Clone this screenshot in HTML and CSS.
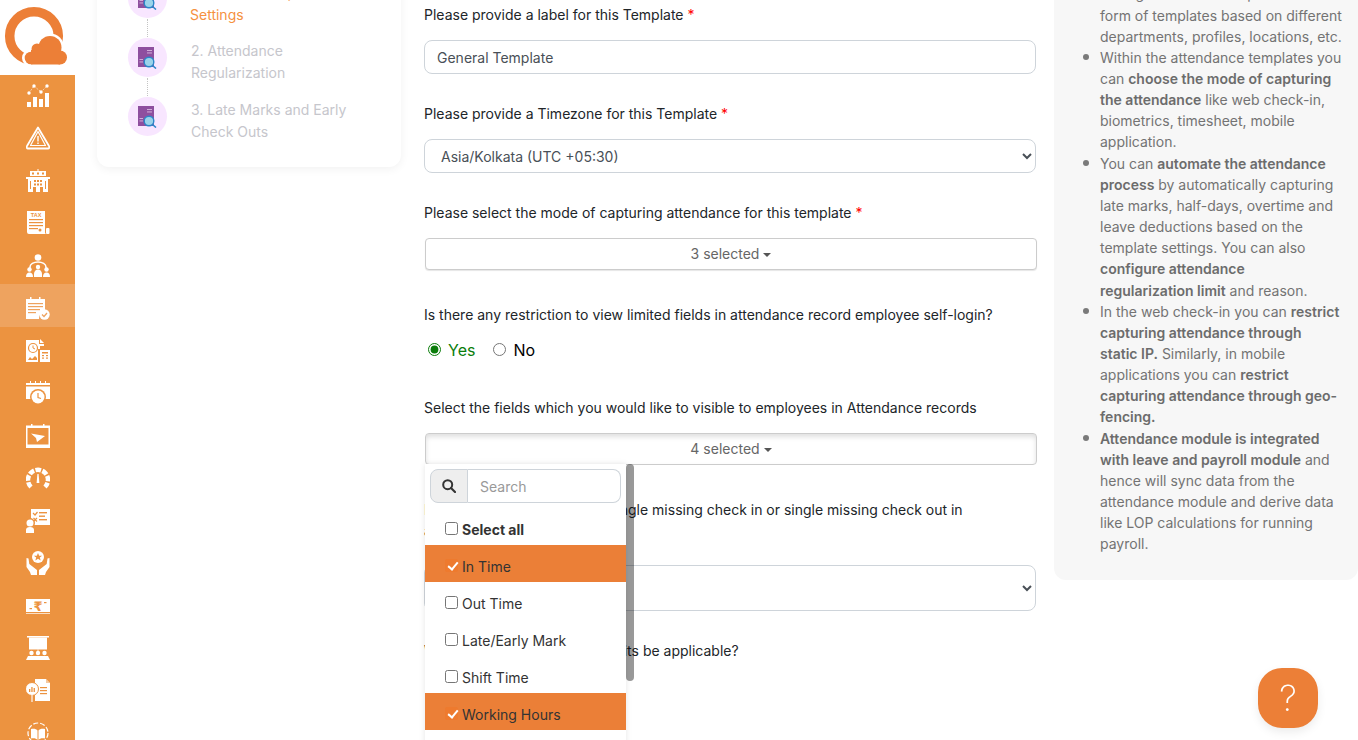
FILE: index.html
```html
<!DOCTYPE html>
<html lang="en">
<head>
<meta charset="utf-8">
<title>Attendance Template</title>
<link rel="stylesheet" href="styles.css">
</head>
<body>
<div class="page">
  <aside class="sidebar">
    <div class="logo">
      <svg width="75" height="75" viewBox="0 0 75 75">
        <circle cx="34" cy="36" r="24.3" fill="none" stroke="#ec7f37" stroke-width="9.5"/>
        <g fill="#fff"><circle cx="50" cy="47.500" r="14"/><circle cx="37" cy="49" r="8"/><circle cx="31" cy="58" r="9"/><circle cx="60" cy="57.500" r="10"/><rect x="30" y="52" width="30" height="15"/></g>
        <g fill="#ec7f37"><circle cx="50" cy="47.500" r="11.500"/><circle cx="37" cy="49" r="5.500"/><circle cx="31" cy="58" r="6.300"/><circle cx="60" cy="57.500" r="7"/><rect x="31" y="50" width="29" height="14.500"/></g>
      </svg>
    </div>
    <nav class="nav">
      <a class="nav-item"><svg class="ico" viewBox="0 0 24 24"><rect x="1" y="18" width="4" height="5"/><rect x="7" y="13" width="4" height="10"/><rect x="13" y="15" width="4" height="8"/><rect x="19" y="9" width="4" height="14"/><path d="M3 9l5-7 7 6 6-6" fill="none" stroke="#fff" stroke-width="1" stroke-dasharray="1.500 1.500" opacity=".7"/><circle cx="3" cy="9" r="1.700"/><circle cx="8" cy="2" r="1.700"/><circle cx="15" cy="8" r="1.700"/><circle cx="21" cy="2" r="1.700"/></svg></a>
      <a class="nav-item"><svg class="ico" viewBox="0 0 24 24"><path d="M12 1.500L23 20a1.500 1.500 0 0 1-1 2.500H2A1.500 1.500 0 0 1 1 20z" fill="none" stroke="#fff" stroke-width="1.800" stroke-linejoin="round"/><path d="M12 5.500L19.500 19.500H4.500z" fill="none" stroke="#fff" stroke-width="1.200" stroke-linejoin="round"/><rect x="11.300" y="10" width="1.400" height="5.500"/><rect x="11.300" y="16.500" width="1.400" height="1.500"/></svg></a>
      <a class="nav-item"><svg class="ico" viewBox="0 0 24 24"><rect x="11.500" y="0" width="1" height="3"/><rect x="4" y="2" width="16" height="5"/><path d="M0 8h24v2h-2v13h-5v-5h-3v5h-4v-5H7v5H2V10H0z"/><g fill="#ec9340"><rect x="6" y="3.500" width="2" height="2"/><rect x="11" y="3.500" width="2" height="2"/><rect x="16" y="3.500" width="2" height="2"/><rect x="8" y="11" width="2" height="2"/><rect x="11" y="11" width="2" height="2"/><rect x="14" y="11" width="2" height="2"/><rect x="8" y="14.500" width="2" height="2"/><rect x="11" y="14.500" width="2" height="2"/><rect x="14" y="14.500" width="2" height="2"/><rect x="4" y="12" width="1" height="8"/><rect x="19" y="12" width="1" height="8"/></g></svg></a>
      <a class="nav-item"><svg class="ico" viewBox="0 0 24 24"><path d="M1 0h18v21a2 2 0 0 0 1 2H3a2 2 0 0 1-2-2z"/><rect x="20" y="17" width="3.500" height="6" rx="1"/><text x="10" y="6" class="ico-tax">TAX</text><g fill="#ec9340"><rect x="3" y="8" width="14" height="1.200"/><rect x="3" y="11" width="14" height="1.200"/><rect x="3" y="14" width="14" height="1.200"/><rect x="3" y="17" width="9" height="1.200"/><circle cx="14" cy="19" r="1.500"/></g></svg></a>
      <a class="nav-item"><svg class="ico" viewBox="0 0 24 24"><circle cx="12" cy="3.500" r="3.300"/><path d="M4 14v-1a8 5 0 0 1 16 0v1" fill="none" stroke="#fff" stroke-width="1.500"/><circle cx="3.500" cy="15.500" r="2.200"/><circle cx="12" cy="13" r="2.200"/><circle cx="20.500" cy="15.500" r="2.200"/><path d="M0 23a3.500 4.500 0 0 1 7 0zM8 20a4 4.500 0 0 1 8 0v3H8zM17 23a3.500 4.500 0 0 1 7 0z"/></svg></a>
      <a class="nav-item is-active"><svg class="ico" viewBox="0 0 24 24"><path d="M0 3h19v12a7 7 0 0 0-6 8H0z"/><rect x="4" y="1" width="1.500" height="4"/><rect x="13" y="1" width="1.500" height="4"/><g fill="#eea35f"><rect x="2" y="7" width="15" height="1.200"/><rect x="2" y="10" width="15" height="1.200"/><rect x="2" y="13" width="12" height="1.200"/><rect x="2" y="16" width="8" height="1.200"/></g><circle cx="18.500" cy="18.500" r="5.200"/><path d="M16 18.500l2 2 3-3.500" fill="none" stroke="#eea35f" stroke-width="1.300"/></svg></a>
      <a class="nav-item"><svg class="ico" viewBox="0 0 24 24"><path d="M0 1h13v4h5v2h-4v3h-2v13H0z"/><path d="M14 0l4 4h-4z"/><rect x="14" y="11" width="10" height="12"/><circle cx="7" cy="9" r="4.500" fill="none" stroke="#ec9340" stroke-width="1.200"/><path d="M7 6.500V9l2 1" fill="none" stroke="#ec9340" stroke-width="1"/><path d="M2 21l2-3 2 2 3-3 2 2v2z" fill="#ec9340"/><g fill="#ec9340"><rect x="16" y="13" width="6" height="1.500"/><rect x="16" y="16" width="2" height="1.200"/><rect x="20" y="16" width="2" height="1.200"/><rect x="16" y="18.500" width="2" height="1.200"/><rect x="20" y="18.500" width="2" height="1.200"/></g></svg></a>
      <a class="nav-item"><svg class="ico" viewBox="0 0 24 24"><rect x="0" y="2" width="24" height="2"/><path d="M0 5.500h24V18H0z"/><g><rect x="4" y="0" width="1" height="2"/><rect x="9" y="0" width="1" height="2"/><rect x="14" y="0" width="1" height="2"/><rect x="19" y="0" width="1" height="2"/></g><circle cx="12" cy="16" r="8" fill="#ec9340"/><circle cx="12" cy="16" r="6.500"/><path d="M12 12v4.500l3 1" fill="none" stroke="#ec9340" stroke-width="1.200"/></svg></a>
      <a class="nav-item"><svg class="ico" viewBox="0 0 24 24"><path d="M0 1.500h24V24H0zM1.500 4v16.500h21V4z" fill-rule="evenodd"/><rect x="5" y="0" width="1.500" height="4"/><rect x="17" y="0" width="1.500" height="4"/><path d="M5 9.500L19 12l-8 6-1-4z"/></svg></a>
      <a class="nav-item"><svg class="ico" viewBox="0 0 24 24"><path d="M5 21A10 10 0 1 1 19 21" fill="none" stroke="#fff" stroke-width="4.500" stroke-dasharray="5.500 1.500"/><path d="M11.400 8h1.200l.8 9h-2.800z"/></svg></a>
      <a class="nav-item"><svg class="ico" viewBox="0 0 24 24"><rect x="5" y="0" width="19" height="16"/><g fill="#ec9340"><rect x="13" y="3" width="8" height="1.400"/><rect x="13" y="6.500" width="6" height="1.400"/><rect x="13" y="10" width="8" height="1.400"/></g><path d="M7 4l2 2 2.500-3M7.500 9l3.500 3.500M11 9l-3.500 3.500" fill="none" stroke="#ec9340" stroke-width="1.200"/><circle cx="4" cy="14" r="5" fill="#ec9340"/><circle cx="4" cy="14" r="3.500"/><path d="M0 24v-3a4 3 0 0 1 8 0v3z"/></svg></a>
      <a class="nav-item"><svg class="ico" viewBox="0 0 24 24"><circle cx="12" cy="6" r="6"/><path d="M12 2l1.200 2.700h2.900l-2.300 1.900.9 2.900-2.700-1.700-2.700 1.700.9-2.900-2.300-1.900h2.900z" fill="#ec9340"/><path d="M.5 7l2 .5.800 5.500 7.700 6v5H5l-1-3-3.500-5zM23.500 7l-2 .5-.8 5.500-7.700 6v5h6l1-3 3.500-5z"/></svg></a>
      <a class="nav-item"><svg class="ico" viewBox="0 0 24 24"><path d="M0 5h24v13H0z"/><rect x="0" y="19" width="24" height="1" opacity=".7"/><text x="12" y="16.500" class="ico-rupee">₹</text><rect x="3.500" y="14" width="2.500" height="1.200" fill="#ec9340"/><rect x="18" y="8" width="2.500" height="1.200" fill="#ec9340"/></svg></a>
      <a class="nav-item"><svg class="ico" viewBox="0 0 24 24"><rect x="1" y="0" width="22" height="1.500"/><rect x="3" y="1.500" width="18" height="12"/><rect x="11.600" y="13.500" width=".8" height="2"/><circle cx="5.500" cy="17" r="2.200"/><circle cx="12" cy="17" r="2.200"/><circle cx="18.500" cy="17" r="2.200"/><path d="M0 24l2-4h20l2 4z"/></svg></a>
      <a class="nav-item"><svg class="ico" viewBox="0 0 24 24"><path d="M9 0h11l4 4v18H9z"/><path d="M20 0l4 4h-4z" fill="#ec9340" opacity=".5"/><circle cx="6" cy="10" r="6.500" stroke="#ec9340" stroke-width="1"/><rect x="5.300" y="16" width="1.400" height="7" opacity=".8"/><g fill="#ec9340"><rect x="3" y="10" width="1.300" height="3"/><rect x="5.300" y="8" width="1.300" height="5"/><rect x="7.600" y="9" width="1.300" height="4"/><rect x="14" y="8" width="7" height="1.200"/><rect x="14" y="11" width="7" height="1.200"/><rect x="14" y="14" width="7" height="1.200"/></g></svg></a>
      <a class="nav-item"><svg class="ico" viewBox="0 0 24 24"><circle cx="12" cy="12" r="10" fill="none" stroke="#fff" stroke-width="1.200" stroke-dasharray="5 2"/><path d="M5 8c3-.5 5.500 0 6.500 1.500V19c-1-1.500-3.500-2-6.500-1.500zM19 8c-3-.5-5.500 0-6.500 1.500V19c1-1.500 3.500-2 6.500-1.500z"/></svg></a>
    </nav>
  </aside>

  <main class="content">
    <section class="steps-card">
      <div class="step step-current">
        <div class="step-dot"><svg class="step-ico" viewBox="0 0 20 22"><rect x="0" y="0" width="16" height="20" fill="#8e4f9f"/><g fill="#d9b8e0"><rect x="9" y="3" width="5" height=".9"/><rect x="9" y="5.500" width="5" height=".9"/><rect x="1.500" y="12" width="3.500" height=".9"/><rect x="1.500" y="14.500" width="3.500" height=".9"/></g><circle cx="11" cy="15" r="4.800" fill="#9bd3ea" stroke="#2b87c8" stroke-width="1.400"/><path d="M14.500 18.500l3.500 3" stroke="#2b87c8" stroke-width="1.600"/></svg></div>
        <div class="step-text">1. General Template Settings</div>
      </div>
      <div class="step">
        <div class="step-dot"><svg class="step-ico" viewBox="0 0 20 22"><rect x="0" y="0" width="16" height="20" fill="#8e4f9f"/><g fill="#d9b8e0"><rect x="9" y="3" width="5" height=".9"/><rect x="9" y="5.500" width="5" height=".9"/><rect x="1.500" y="12" width="3.500" height=".9"/><rect x="1.500" y="14.500" width="3.500" height=".9"/></g><circle cx="11" cy="15" r="4.800" fill="#9bd3ea" stroke="#2b87c8" stroke-width="1.400"/><path d="M14.500 18.500l3.500 3" stroke="#2b87c8" stroke-width="1.600"/></svg></div>
        <div class="step-text">2. Attendance Regularization</div>
      </div>
      <div class="step step-last">
        <div class="step-dot"><svg class="step-ico" viewBox="0 0 20 22"><rect x="0" y="0" width="16" height="20" fill="#8e4f9f"/><g fill="#d9b8e0"><rect x="9" y="3" width="5" height=".9"/><rect x="9" y="5.500" width="5" height=".9"/><rect x="1.500" y="12" width="3.500" height=".9"/><rect x="1.500" y="14.500" width="3.500" height=".9"/></g><circle cx="11" cy="15" r="4.800" fill="#9bd3ea" stroke="#2b87c8" stroke-width="1.400"/><path d="M14.500 18.500l3.500 3" stroke="#2b87c8" stroke-width="1.600"/></svg></div>
        <div class="step-text">3. Late Marks and Early Check Outs</div>
      </div>
    </section>

    <section class="form">
      <div class="field gap-29">
        <label class="label">Please provide a label for this Template <span class="req">*</span></label>
        <input class="control" type="text" value="General Template">
      </div>
      <div class="field gap-29">
        <label class="label">Please provide a Timezone for this Template <span class="req">*</span></label>
        <select class="control"><option>Asia/Kolkata (UTC +05:30)</option></select>
      </div>
      <div class="field gap-34">
        <label class="label">Please select the mode of capturing attendance for this template <span class="req">*</span></label>
        <button class="multi" type="button">3 selected<span class="caret"></span></button>
      </div>
      <div class="field gap-37">
        <label class="label">Is there any restriction to view limited fields in attendance record employee self-login?</label>
        <div class="radios">
          <label class="radio radio-yes"><input type="radio" name="restrict" checked>Yes</label>
          <label class="radio"><input type="radio" name="restrict">No</label>
        </div>
      </div>
      <div class="field gap-34 has-menu">
        <label class="label">Select the fields which you would like to visible to employees in Attendance records</label>
        <button class="multi multi-open" type="button">4 selected<span class="caret"></span></button>
        <div class="menu">
          <div class="menu-search">
            <span class="menu-addon"><svg width="14" height="14" viewBox="0 0 14 14"><circle cx="5.700" cy="5.700" r="4.500" fill="none" stroke="#333" stroke-width="2"/><path d="M9 9l4 4" stroke="#333" stroke-width="2.200" stroke-linecap="round"/></svg></span>
            <input class="menu-input" type="text" placeholder="Search">
          </div>
          <label class="opt opt-all"><input type="checkbox">Select all</label>
          <label class="opt opt-on"><input type="checkbox" checked>In Time</label>
          <label class="opt"><input type="checkbox">Out Time</label>
          <label class="opt"><input type="checkbox">Late/Early Mark</label>
          <label class="opt"><input type="checkbox">Shift Time</label>
          <label class="opt opt-on"><input type="checkbox" checked>Working Hours</label>
          <span class="menu-thumb"></span>
        </div>
      </div>
      <div class="field gap-29">
        <label class="label label-tall">How do you want to mark a single missing check in or single missing check out in attendance?</label>
        <select class="control control-tall"><option></option></select>
      </div>
      <div class="field">
        <label class="label">When should the late mark limits be applicable?</label>
      </div>
    </section>

    <section class="info">
      <ul class="info-list">
        <li>Configure attendance policies in the form of templates based on different departments, profiles, locations, etc.</li>
        <li>Within the attendance templates you can <b>choose the mode of capturing the attendance</b> like web check-in, biometrics, timesheet, mobile application.</li>
        <li>You can <b>automate the attendance process</b> by automatically capturing late marks, half-days, overtime and leave deductions based on the template settings. You can also <b>configure attendance<br>regularization limit</b> and reason.</li>
        <li>In the web check-in you can <b>restrict capturing attendance through<br>static IP.</b> Similarly, in mobile applications you can <b>restrict capturing attendance through geo-fencing.</b></li>
        <li><b>Attendance module is integrated with leave and payroll module</b> and hence will sync data from the attendance module and derive data like LOP calculations for running payroll.</li>
      </ul>
    </section>
  </main>
</div>
<button class="help" type="button">?</button>
</body>
</html>
```
FILE: styles.css
```css
* { box-sizing: border-box; }
html, body { margin: 0; height: 100%; overflow: hidden; background: #fff; }
body { font-family: Inter, "Liberation Sans", sans-serif; font-size: 14px; color: #212529; }

.page { display: flex; height: 740px; overflow: hidden; }

/* sidebar */
.sidebar { width: 75px; flex: none; display: flex; flex-direction: column; }
.logo { height: 75px; flex: none; }
.logo svg { display: block; }
.nav { flex: 1; background: #ec9340; overflow: hidden; }
.nav-item { height: 42.5px; padding-top: 6px; display: flex; align-items: center; justify-content: center; }
.nav-item:first-child { margin-top: -3.5px; }
.nav-item.is-active { background: #eea35f; }
.ico { width: 24px; height: 24px; fill: #fff; display: block; }
.ico-tax { font: 700 5.5px "Liberation Sans", sans-serif; fill: #ec9340; text-anchor: middle; }
.ico-rupee { font: 700 13px "DejaVu Sans", sans-serif; fill: #ec9340; text-anchor: middle; }

/* content columns */
.content { flex: 1; display: flex; align-items: flex-start; padding-left: 22px; gap: 0; }

/* steps card */
.steps-card {
  width: 304px; flex: none; margin-top: -21px; padding: 0 30px 11px 31px;
  background: #fff; border-radius: 0 0 12px 12px;
  box-shadow: 0 2px 10px rgba(0, 0, 0, .06);
}
.step { position: relative; display: flex; gap: 24px; height: 59px; }
.step-dot {
  width: 39px; height: 39px; flex: none; border-radius: 50%; background: #f8e6ff;
  display: flex; align-items: center; justify-content: center;
}
.step:not(.step-last)::after {
  content: ""; position: absolute; left: 19px; top: 40px; height: 18px;
  border-left: 1.5px dotted #c4c4c4;
}
.step-ico { width: 20px; height: 22px; display: block; }
.step-text { color: #c6c6cc; line-height: 22px; padding-top: 2px; width: 175px; }
.step-current .step-text { color: #f5913f; margin-left: -1px; padding-top: 3px; }

/* form */
.form { width: 612px; flex: none; margin: 4px 18px 0 23px; }
.field { position: relative; }
.gap-29 { margin-bottom: 29px; }
.gap-34 { margin-bottom: 34px; }
.gap-37 { margin-bottom: 37px; }
.label { display: block; line-height: 21px; margin-bottom: 15px; color: #212529; }
.label-tall { margin-bottom: 24px; }
.req { color: #f00; }
.control {
  display: block; width: 100%; height: 34px; padding: 0 12px;
  font: 14px Inter, sans-serif; color: #495057; background: #fff;
  border: 1px solid #ced4da; border-radius: 8px; outline: none;
}
.control-tall { height: 46px; }
.multi {
  display: block; width: 612px; height: 32px; margin-left: 1px; padding: 0 12px 2px;
  font: 14px Inter, sans-serif; color: #666; background: #fff;
  border: 1px solid #ccc; border-radius: 4px; box-shadow: 0 1px 1px rgba(0, 0, 0, .1);
}
.multi-open { box-shadow: inset 0 3px 5px rgba(0, 0, 0, .125); }
.caret {
  display: inline-block; margin-left: 4px; vertical-align: middle;
  border-top: 4px solid #555; border-left: 4px solid transparent; border-right: 4px solid transparent;
}
.radios { display: flex; gap: 18px; margin-top: -1px; padding-left: 4px; height: 21px; align-items: center; }
.radio { display: flex; align-items: center; gap: 7px; font-size: 16px; color: #000; }
.radio input { margin: 0; width: 13px; height: 13px; accent-color: #0a7d0a; }
.radio-yes { color: #0a7d0a; }

/* dropdown menu */
.menu {
  position: absolute; left: 1px; top: 67px; width: 201px; height: 300px; padding-top: 5px;
  background: #fff; box-shadow: 0 0 6px rgba(0, 0, 0, .1); z-index: 5;
}
.menu-search { display: flex; width: 191px; height: 34px; margin-left: 5px; margin-bottom: 5px; }
.menu-addon {
  width: 38px; flex: none; display: flex; align-items: center; justify-content: center;
  background: #eee; border: 1px solid #ced4da; border-radius: 8px 0 0 8px;
}
.menu-input {
  flex: 1; min-width: 0; padding: 0 12px; font: 14px Inter, sans-serif;
  border: 1px solid #ced4da; border-left: 0; border-radius: 0 8px 8px 0; outline: none;
}
.menu-input::placeholder { color: #999; }
.opt {
  display: flex; align-items: center; width: 201px; height: 37px; padding: 6px 0 0 20px;
  color: #333; line-height: 31px;
}
.opt input { margin: 0 4px 0 0; width: 13px; height: 13px; position: relative; top: -1px; }
.opt-all { font-weight: 700; }
.opt-on { background: #eb7f37; }
.opt-on input {
  appearance: none; background: #ee7a2e; border-radius: 2px; border: 0;
}
.opt-on input::after {
  content: ""; position: absolute; left: 4.5px; top: 1px; width: 4px; height: 8px;
  border: solid #fff; border-width: 0 2.5px 2.5px 0; transform: rotate(40deg);
}
.menu-thumb {
  position: absolute; left: 201px; top: 0; width: 8px; height: 217px;
  background: rgba(0, 0, 0, .4); border-radius: 4px;
}

/* info panel */
.info {
  width: 304px; flex: none; margin-top: -40px; padding: 23.35px 14px 25px 0;
  background: #f7f7f7; border-radius: 12px; color: #737373; line-height: 21.16px;
}
.info-list { margin: 0; padding-left: 46px; list-style: none; }
.info-list li { position: relative; }
.info-list li::before {
  content: ""; position: absolute; left: -17.5px; top: 7.5px; width: 6px; height: 6px;
  border-radius: 50%; background: #7a7a7a;
}
.info-list b { font-weight: 600; color: #6c6c6c; }

/* help button */
.help {
  position: fixed; left: 1258px; top: 668px; width: 60px; height: 60px; padding: 0;
  border: 0; border-radius: 24px; background: #ec7f37; color: #fff;
  font: 200 36px Inter, sans-serif; box-shadow: 0 4px 10px rgba(0, 0, 0, .08);
}
```
